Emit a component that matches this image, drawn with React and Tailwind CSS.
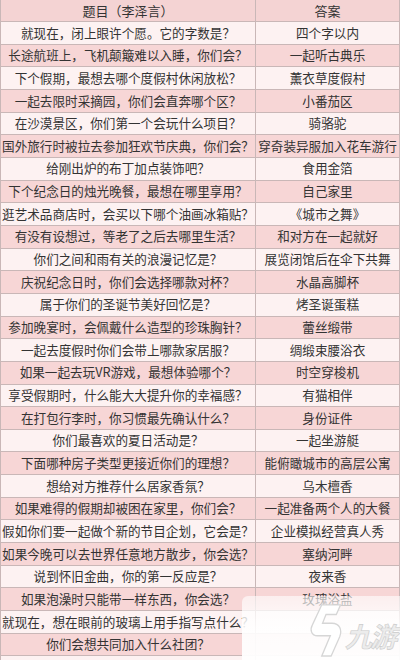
import React from 'react';

const rows = [
  ['就现在，闭上眼许个愿。它的字数是？', '四个字以内'],
  ['长途航班上，飞机颠簸难以入睡，你们会？', '一起听古典乐'],
  ['下个假期，最想去哪个度假村休闲放松？', '薰衣草度假村'],
  ['一起去限时采摘园，你们会直奔哪个区？', '小番茄区'],
  ['在沙漠景区，你们第一个会玩什么项目？', '骑骆驼'],
  ['国外旅行时被拉去参加狂欢节庆典，你们会？', '穿奇装异服加入花车游行'],
  ['给刚出炉的布丁加点装饰吧？', '食用金箔'],
  ['下个纪念日的烛光晚餐，最想在哪里享用？', '自己家里'],
  ['逛艺术品商店时，会买以下哪个油画冰箱贴？', '《城市之舞》'],
  ['有没有设想过，等老了之后去哪里生活？', '和对方在一起就好'],
  ['你们之间和雨有关的浪漫记忆是？', '展览闭馆后在伞下共舞'],
  ['庆祝纪念日时，你们会选择哪款对杯？', '水晶高脚杯'],
  ['属于你们的圣诞节美好回忆是？', '烤圣诞蛋糕'],
  ['参加晚宴时，会佩戴什么造型的珍珠胸针？', '蕾丝缎带'],
  ['一起去度假时你们会带上哪款家居服？', '绸缎束腰浴衣'],
  ['如果一起去玩VR游戏，最想体验哪个？', '时空穿梭机'],
  ['享受假期时，什么能大大提升你的幸福感？', '有猫相伴'],
  ['在打包行李时，你习惯最先确认什么？', '身份证件'],
  ['你们最喜欢的夏日活动是？', '一起坐游艇'],
  ['下面哪种房子类型更接近你们的理想？', '能俯瞰城市的高层公寓'],
  ['想给对方推荐什么居家香氛？', '乌木檀香'],
  ['如果难得的假期却被困在家里，你们会？', '一起准备两个人的大餐'],
  ['假如你们要一起做个新的节目企划，它会是？', '企业模拟经营真人秀'],
  ['如果今晚可以去世界任意地方散步，你会选？', '塞纳河畔'],
  ['说到怀旧金曲，你的第一反应是？', '夜来香'],
  ['如果泡澡时只能带一样东西，你会选？', '玫瑰浴盐'],
  ['就现在，想在眼前的玻璃上用手指写点什么？', ''],
  ['你们会想共同加入什么社团？', ''],
  ['', ''],
];

export default function App() {
  return (
    <div
      className="relative w-[400px] h-[660px] overflow-hidden bg-[#fdf2f2] text-[#333333] text-[12.6px] leading-none"
      style={{ fontFamily: '"Noto Sans CJK SC", "Noto Sans", sans-serif' }}
    >
      <div className="border-l border-r border-[#c9b7b7]">
        <div className="flex h-[22px] bg-[#f4d3d3] border-b border-[#c9b7b7]">
          <div className="w-[255px] shrink-0 flex items-center justify-center border-r border-[#c9b7b7] text-[13px]">
            题目（李泽言）
          </div>
          <div className="flex-1 flex items-center justify-center text-[13px]">答案</div>
        </div>
        {rows.map(([q, a], i) => (
          <div
            key={i}
            className={`flex h-[22.67px] border-b border-[#c9b7b7] ${
              i % 2 === 0 ? 'bg-[#fdf2f2]' : 'bg-[#f7d6d6]'
            }`}
          >
            <div className="w-[255px] shrink-0 flex items-center justify-center border-r border-[#c9b7b7] whitespace-nowrap">
              {q}
            </div>
            <div className="flex-1 flex items-center justify-center whitespace-nowrap">{a}</div>
          </div>
        ))}
      </div>

      {/* watermark wash */}
      <div className="absolute left-[242px] top-[596px] right-0 bottom-0 rounded-tl-[6px] bg-gradient-to-b from-white/60 via-white/90 to-white/95" />

      {/* 九游 logo */}
      <div className="absolute left-[308px] top-[602px] flex items-end gap-[1px] whitespace-nowrap">
        <svg width="36" height="56" viewBox="0 0 42 58" preserveAspectRatio="none" className="shrink-0">
          <path
            d="M16 3 L38 3 L33 13 L21 13 L17 22 L28 22 C37 22 40 29 37 36 L27 56 L16 56 L26 35 L11 35 C4 35 2 29 5 24 Z"
            fill="#ffffff"
            stroke="#d6d6d6"
            strokeWidth="1.5"
          />
        </svg>
        <span
          className="text-[27px] leading-none font-bold italic text-[#ececec] tracking-[-2px] mb-[9px]"
          style={{ fontFamily: '"Noto Sans CJK SC", sans-serif', WebkitTextStroke: '0.6px #cccccc' }}
        >
          九游
        </span>
      </div>
    </div>
  );
}
